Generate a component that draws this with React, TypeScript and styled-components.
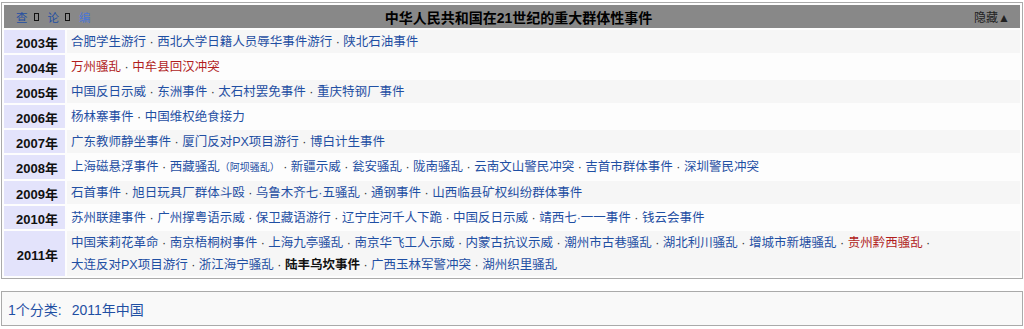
import { Fragment } from 'react';
import styled, { createGlobalStyle } from 'styled-components';

type Item = { text: string; kind?: 'red' | 'self'; note?: string; trailing?: boolean };

const rows: { year: string; items: Item[] }[] = [
  {
    year: '2003年',
    items: [{ text: '合肥学生游行' }, { text: '西北大学日籍人员辱华事件游行' }, { text: '陕北石油事件' }],
  },
  {
    year: '2004年',
    items: [
      { text: '万州骚乱', kind: 'red' },
      { text: '中牟县回汉冲突', kind: 'red' },
    ],
  },
  {
    year: '2005年',
    items: [{ text: '中国反日示威' }, { text: '东洲事件' }, { text: '太石村罢免事件' }, { text: '重庆特钢厂事件' }],
  },
  { year: '2006年', items: [{ text: '杨林寨事件' }, { text: '中国维权绝食接力' }] },
  {
    year: '2007年',
    items: [{ text: '广东教师静坐事件' }, { text: '厦门反对PX项目游行' }, { text: '博白计生事件' }],
  },
  {
    year: '2008年',
    items: [
      { text: '上海磁悬浮事件' },
      { text: '西藏骚乱', note: '阿坝骚乱' },
      { text: '新疆示威' },
      { text: '瓮安骚乱' },
      { text: '陇南骚乱' },
      { text: '云南文山警民冲突' },
      { text: '吉首市群体事件' },
      { text: '深圳警民冲突' },
    ],
  },
  {
    year: '2009年',
    items: [
      { text: '石首事件' },
      { text: '旭日玩具厂群体斗殴' },
      { text: '乌鲁木齐七·五骚乱' },
      { text: '通钢事件' },
      { text: '山西临县矿权纠纷群体事件' },
    ],
  },
  {
    year: '2010年',
    items: [
      { text: '苏州联建事件' },
      { text: '广州撑粤语示威' },
      { text: '保卫藏语游行' },
      { text: '辽宁庄河千人下跪' },
      { text: '中国反日示威' },
      { text: '靖西七·一一事件' },
      { text: '钱云会事件' },
    ],
  },
  {
    year: '2011年',
    items: [
      { text: '中国茉莉花革命' },
      { text: '南京梧桐树事件' },
      { text: '上海九亭骚乱' },
      { text: '南京华飞工人示威' },
      { text: '内蒙古抗议示威' },
      { text: '潮州市古巷骚乱' },
      { text: '湖北利川骚乱' },
      { text: '增城市新塘骚乱' },
      { text: '贵州黔西骚乱', kind: 'red', trailing: true },
      { text: '大连反对PX项目游行' },
      { text: '浙江海宁骚乱' },
      { text: '陆丰乌坎事件', kind: 'self' },
      { text: '广西玉林军警冲突' },
      { text: '湖州织里骚乱' },
    ],
  },
];

const GlobalStyle = createGlobalStyle`
  html, body {
    margin: 0;
    padding: 0;
    background: #ffffff;
  }
  body {
    font-family: "Liberation Sans", "Noto Sans CJK SC", sans-serif;
    color: #202122;
  }
`;

const Page = styled.div`
  padding: 2px 1px 0 1px;
`;

const Navbox = styled.div`
  border: 1px solid #aaaaaa;
  padding: 2px;
  display: flex;
  flex-direction: column;
  gap: 2px;
  background: #fdfdfd;
`;

const Header = styled.div`
  display: grid;
  grid-template-columns: 90px 1fr 77px;
  align-items: center;
  height: 23px;
  background: #888888;
`;

const Vte = styled.div`
  display: flex;
  align-items: center;
  padding-left: 12px;
  font-size: 11.5px;
`;

const VteLink = styled.span<{ $faded?: boolean }>`
  color: ${({ $faded }) => ($faded ? '#4a76d6' : '#1f4fa3')};
`;

const Tofu = styled.span`
  display: inline-block;
  width: 3px;
  height: 6px;
  border: 1px solid #111111;
  margin: 0 9px 0 6px;
`;

const Title = styled.div`
  text-align: center;
  font-size: 14px;
  font-weight: bold;
  color: #000000;
`;

const Toggle = styled.div`
  text-align: right;
  padding-right: 10px;
  font-size: 12px;
  color: #222222;
`;

const Row = styled.div`
  display: flex;
  gap: 2px;
`;

const Group = styled.div`
  flex: 0 0 61px;
  display: flex;
  align-items: center;
  justify-content: flex-end;
  padding: 1px 7px 0 0;
  box-sizing: border-box;
  background: #e3e3fb;
  font-size: 13px;
  font-weight: bold;
  color: #111111;
`;

const List = styled.div<{ $odd: boolean }>`
  flex: 1;
  min-height: 23px;
  padding: 1px 4px 0 4px;
  box-sizing: border-box;
  line-height: 22px;
  font-size: 12.5px;
  background: ${({ $odd }) => ($odd ? '#f6f6f6' : '#fdfdfd')};
`;

const ItemWrap = styled.span`
  white-space: nowrap;
`;

const Entry = styled.span<{ $kind?: 'red' | 'self' }>`
  color: ${({ $kind }) => ($kind === 'red' ? '#b11d1d' : $kind === 'self' ? '#111111' : '#1f4fa3')};
  font-weight: ${({ $kind }) => ($kind === 'self' ? 'bold' : 'normal')};
`;

const Note = styled.span`
  font-size: 10px;
`;

const Sep = styled.span`
  color: #333333;
`;

const Catlinks = styled.div`
  margin-top: 12px;
  border: 1px solid #aaaaaa;
  background: #f9f9f9;
  height: 35px;
  box-sizing: border-box;
  display: flex;
  align-items: center;
  gap: 10px;
  padding-left: 6px;
  font-size: 14px;
  color: #1f4fa3;
`;

export default function App() {
  return (
    <Page>
      <GlobalStyle />
      <Navbox>
        <Header>
          <Vte>
            <VteLink>查</VteLink>
            <Tofu />
            <VteLink>论</VteLink>
            <Tofu />
            <VteLink $faded>编</VteLink>
          </Vte>
          <Title>中华人民共和国在21世纪的重大群体性事件</Title>
          <Toggle>隐藏▲</Toggle>
        </Header>
        {rows.map((row, i) => (
          <Row key={row.year}>
            <Group>{row.year}</Group>
            <List $odd={i % 2 === 0}>
              {row.items.map((item, j) => (
                <Fragment key={item.text}>
                  <ItemWrap>
                    <Entry $kind={item.kind}>
                      {item.text}
                      {item.note && <Note>（{item.note}）</Note>}
                    </Entry>
                    {(j < row.items.length - 1 || item.trailing) && <Sep>{'\u00a0·'}</Sep>}
                  </ItemWrap>{' '}
                </Fragment>
              ))}
            </List>
          </Row>
        ))}
      </Navbox>
      <Catlinks>
        <span>1个分类:</span>
        <span>2011年中国</span>
      </Catlinks>
    </Page>
  );
}
